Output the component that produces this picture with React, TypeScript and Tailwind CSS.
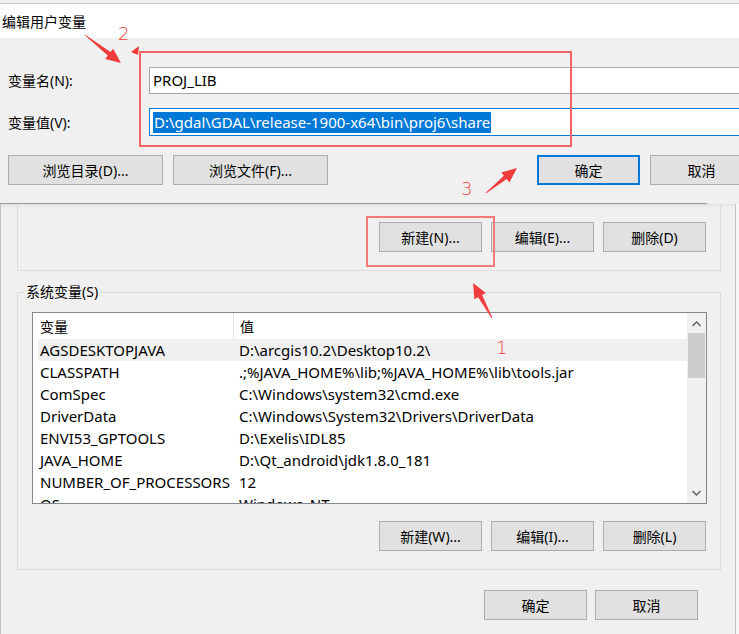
import React from 'react';

const rows: [string, string][] = [
  ['AGSDESKTOPJAVA', 'D:\\arcgis10.2\\Desktop10.2\\'],
  ['CLASSPATH', '.;%JAVA_HOME%\\lib;%JAVA_HOME%\\lib\\tools.jar'],
  ['ComSpec', 'C:\\Windows\\system32\\cmd.exe'],
  ['DriverData', 'C:\\Windows\\System32\\Drivers\\DriverData'],
  ['ENVI53_GPTOOLS', 'D:\\Exelis\\IDL85'],
  ['JAVA_HOME', 'D:\\Qt_android\\jdk1.8.0_181'],
  ['NUMBER_OF_PROCESSORS', '12'],
  ['OS', 'Windows_NT'],
];

function Btn({
  children,
  className = '',
  primary = false,
}: {
  children: React.ReactNode;
  className?: string;
  primary?: boolean;
}) {
  return (
    <div
      className={`shrink-0 h-[30px] flex items-center justify-center bg-[#e1e1e1] text-[14px] text-black ${
        primary ? 'border-2 border-[#0078d7]' : 'border border-[#adadad]'
      } ${className}`}
    >
      {children}
    </div>
  );
}

// tapered red annotation arrow, tail -> head
function arrowPoints(tx: number, ty: number, hx: number, hy: number) {
  const dx = hx - tx;
  const dy = hy - ty;
  const len = Math.hypot(dx, dy);
  const ux = dx / len;
  const uy = dy / len;
  const px = -uy;
  const py = ux;
  const hl = 15;
  const hw = 6.5;
  const bx = hx - ux * hl;
  const by = hy - uy * hl;
  const pts = [
    [tx + px * 0.4, ty + py * 0.4],
    [bx + px * 2.2, by + py * 2.2],
    [bx + px * hw, by + py * hw],
    [hx, hy],
    [bx - px * hw, by - py * hw],
    [bx - px * 2.2, by - py * 2.2],
    [tx - px * 0.4, ty - py * 0.4],
  ];
  return pts.map((p) => p.map((v) => v.toFixed(1)).join(',')).join(' ');
}

export default function App() {
  return (
    <div className="relative w-[739px] h-[634px] overflow-hidden bg-[#f0f0f0] font-['Noto_Sans','Noto_Sans_CJK_SC',sans-serif] text-black">
      {/* Edit user variable dialog */}
      <div className="h-[4px] bg-[#f0f0f0] border-b border-[#c8c8c8]" />
      <div className="h-[34px] bg-white flex items-center pl-[2px] text-[14px]">编辑用户变量</div>
      <div className="h-[165px] bg-[#f0f0f0] pt-[29px]">
        <div className="flex items-center h-[27px]">
          <div className="w-[149px] pl-[8px] text-[14px]">变量名(N):</div>
          <div className="flex-1 h-full bg-white border border-[#a6a6a6] border-r-0 flex items-center pl-[3px] text-[15px]">
            PROJ_LIB
          </div>
        </div>
        <div className="flex items-center h-[28px] mt-[14px]">
          <div className="w-[149px] pl-[8px] text-[14px]">变量值(V):</div>
          <div className="flex-1 h-full bg-white border border-[#0078d7] border-r-0 flex items-center pl-[3px] text-[15px]">
            <span className="bg-[#0078d7] text-white leading-[21px] px-px">
              D:\gdal\GDAL\release-1900-x64\bin\proj6\share
            </span>
          </div>
        </div>
        <div className="flex mt-[19px] pl-[8px]">
          <Btn className="w-[155px]">浏览目录(D)...</Btn>
          <Btn className="w-[155px] ml-[10px]">浏览文件(F)...</Btn>
          <Btn primary className="w-[103px] ml-[209px]">确定</Btn>
          <Btn className="w-[103px] ml-[10px]">取消</Btn>
        </div>
      </div>
      <div className="h-px w-[707px] bg-[#9a9a9a]" />

      {/* Environment variables window underneath */}
      <div className="flex">
        <div className="w-[736px] shrink-0 border-l border-r border-[#c6c6c6] bg-[#f0f0f0] bg-linear-to-b from-[#e2e2e2] to-[#f0f0f0] bg-size-[100%_4px] bg-no-repeat">
          {/* user variables group (bottom part) */}
          <div className="ml-[16px] w-[704px] h-[67px] border-l border-r border-b border-[#dcdcdc] flex justify-end items-start pt-[18px] pr-[14px]">
            <Btn className="w-[103px]">新建(N)...</Btn>
            <Btn className="w-[103px] ml-[9px]">编辑(E)...</Btn>
            <Btn className="w-[103px] ml-[9px]">删除(D)</Btn>
          </div>

          {/* system variables group */}
          <div className="relative ml-[16px] w-[704px] mt-[21px] h-[278px] border border-[#dcdcdc] pt-[19px] pl-[14px] pr-[14px]">
            <div className="absolute left-[6px] top-[-11px] px-[2px] bg-[#f0f0f0] text-[14px] leading-[20px]">系统变量(S)</div>
            <div className="relative w-[675px] h-[192px] bg-white border border-[#828790] overflow-hidden flex">
              <div className="flex-1 pl-[5px] overflow-hidden">
                <div className="h-[26px] flex items-center text-[14px]">
                  <div className="w-[196px] pl-[2px] h-full flex items-center border-r border-[#e5e5e5]">变量</div>
                  <div className="pl-[6px]">值</div>
                </div>
                {rows.map(([k, v], i) => (
                  <div
                    key={k}
                    className={`h-[22px] flex items-center text-[15px] whitespace-nowrap ${i === 0 ? 'bg-[#f0f0f0]' : ''}`}
                  >
                    <div className="w-[201px] pl-[2px]">{k}</div>
                    <div>{v}</div>
                  </div>
                ))}
              </div>
              {/* scrollbar */}
              <div className="w-[19px] h-full bg-[#f0f0f0] flex flex-col items-center">
                <svg width="11" height="8" viewBox="0 0 11 8" className="mt-[7px]">
                  <path d="M1.5 6 L5.5 2 L9.5 6" fill="none" stroke="#606060" strokeWidth="1.4" />
                </svg>
                <div className="w-[17px] h-[45px] bg-[#cdcdcd] mt-[5px]" />
                <div className="flex-1" />
                <svg width="11" height="8" viewBox="0 0 11 8" className="mb-[6px]">
                  <path d="M1.5 2 L5.5 6 L9.5 2" fill="none" stroke="#606060" strokeWidth="1.4" />
                </svg>
              </div>
            </div>
            <div className="flex justify-end mt-[17px]">
              <Btn className="w-[103px]">新建(W)...</Btn>
              <Btn className="w-[103px] ml-[9px]">编辑(I)...</Btn>
              <Btn className="w-[103px] ml-[9px]">删除(L)</Btn>
            </div>
          </div>

          <div className="flex justify-end mt-[20px] pr-[37px]">
            <Btn className="w-[103px]">确定</Btn>
            <Btn className="w-[103px] ml-[8px]">取消</Btn>
          </div>
        </div>
        <div className="flex-1 h-[430px] bg-[#f7f7f7]" />
      </div>

      {/* annotations */}
      <div className="absolute left-[139px] top-[51px] w-[433px] h-[96px] border-2 border-[#f46464]" />
      <div className="absolute left-[366px] top-[216px] w-[129px] h-[51px] border-2 border-[#f47a7a]" />
      <div className="absolute left-[118px] top-[24px] text-[18px] leading-[20px] text-[#f03c3c] font-['DejaVu_Sans',sans-serif] font-light">2</div>
      <div className="absolute left-[461px] top-[179px] text-[18px] leading-[20px] text-[#f03c3c] font-['DejaVu_Sans',sans-serif] font-light">3</div>
      <div className="absolute left-[496px] top-[338px] text-[18px] leading-[20px] text-[#f03c3c] font-['DejaVu_Sans',sans-serif] font-light">1</div>
      <svg className="absolute left-0 top-0 pointer-events-none" width="739" height="634">
        <polygon points={arrowPoints(85, 35, 121, 63)} fill="#f03c3c" />
        <polygon points="139,46 131,52 138,55" fill="#f03c3c" />
        <polygon points={arrowPoints(486, 193, 517, 168)} fill="#f03c3c" />
        <polygon points={arrowPoints(492, 318, 473, 283)} fill="#f03c3c" />
      </svg>
    </div>
  );
}
